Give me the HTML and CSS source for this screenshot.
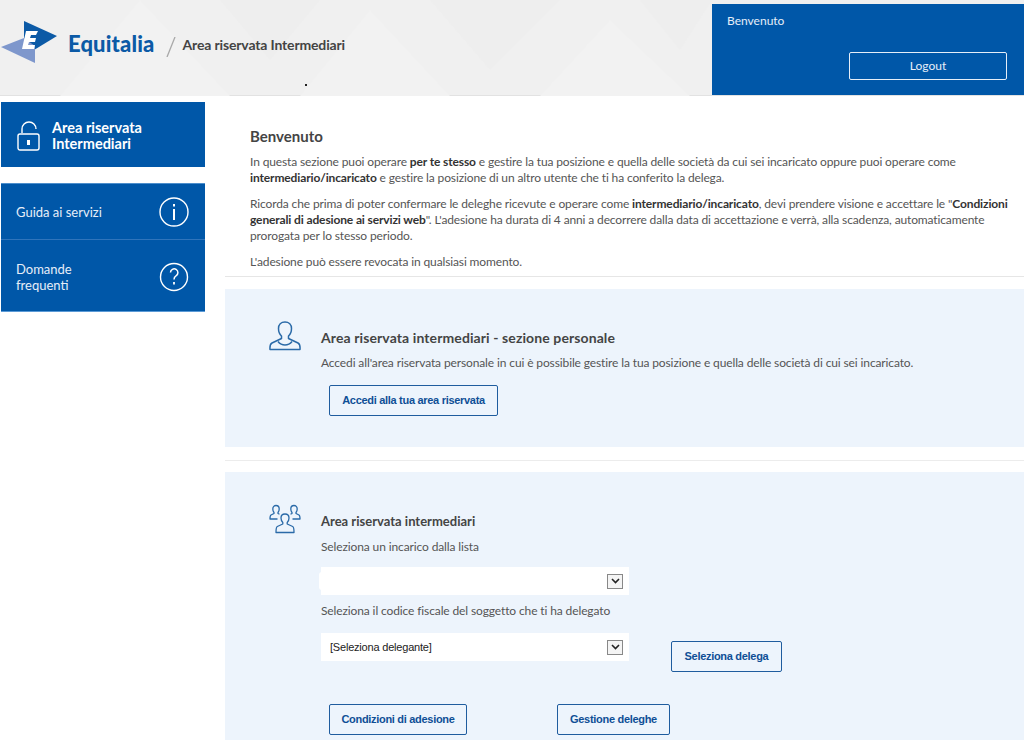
FILE: index.html
```html
<!DOCTYPE html>
<html lang="it">
<head>
  <meta charset="UTF-8">
  <title>Area riservata Intermediari - Equitalia</title>
  <link rel="stylesheet" href="styles.css">
</head>
<body>
  <header class="top">
    <svg class="top-bg" width="1024" height="96" viewBox="0 0 1024 96">
      <polygon points="60,96 140,0 230,96" fill="#f2f2f2"/>
      <polygon points="220,0 270,60 320,0" fill="#eeeeee"/>
      <polygon points="300,96 370,10 450,96" fill="#f2f2f2"/>
      <polygon points="430,0 490,70 560,0" fill="#eeeeee"/>
      <polygon points="540,96 610,20 690,96" fill="#f2f2f2"/>
      <polygon points="640,0 680,50 712,0" fill="#eeeeee"/>
    </svg>
    <i class="stray-dot"></i>
    <div class="brand">
      <svg class="logo" width="60" height="44" viewBox="0 0 60 44">
        <polygon points="24,1 57,16 34,30 24,24" fill="#0c5aa6"/>
        <polygon points="1,27 24,18 35,26 35,43" fill="#7e97cc"/>
        <polygon points="26,11 38,11 36,15 31,15 30,18 36,18 35,22 29,22 28,25 35,25 34,29 22,29" fill="#fff"/>
      </svg>
      <span class="brand-name">Equitalia</span>
      <svg class="brand-sep" width="10" height="20" viewBox="0 0 10 20"><path d="M9 0L1 20" stroke="#a8a8a8" stroke-width="1.300"/></svg>
      <span class="brand-sub">Area riservata Intermediari</span>
    </div>
    <div class="user-box">
      <div class="user-hello">Benvenuto</div>
      <a class="logout" href="#">Logout</a>
    </div>
  </header>

  <div class="page">
    <aside class="side">
      <div class="side-title">
        <svg width="24" height="30" viewBox="0 0 24 30" fill="none" stroke="#fff" stroke-width="1.400">
          <path d="M5 12V8a7 7 0 0 1 14 0"/>
          <rect x="1" y="13" width="21" height="16" rx="2"/>
          <rect x="10" y="19" width="3" height="5" fill="#fff" stroke="none"/>
        </svg>
        <span>Area riservata<br>Intermediari</span>
      </div>
      <nav class="side-nav">
        <a class="side-link" href="#">
          <span>Guida ai servizi</span>
          <svg width="30" height="30" viewBox="0 0 30 30" fill="none" stroke="#fff" stroke-width="1.400">
            <circle cx="15" cy="15" r="14"/>
            <path d="M15 12v11" stroke-width="2"/>
            <path d="M15 7v2.500" stroke-width="2"/>
          </svg>
        </a>
        <a class="side-link" href="#">
          <span>Domande<br>frequenti</span>
          <svg width="30" height="30" viewBox="0 0 30 30" fill="none" stroke="#fff" stroke-width="1.400">
            <circle cx="15" cy="15" r="13.500"/>
            <path d="M11.500 10.500a3.700 3.700 0 1 1 5.500 3.300c-1.400.8-2 1.700-2 3.700" stroke-width="1.500"/>
            <path d="M15 20v2.500" stroke-width="1.800"/>
          </svg>
        </a>
      </nav>
    </aside>

    <main class="main">
      <section class="intro">
        <h1>Benvenuto</h1>
        <p>In questa sezione puoi operare <b>per te stesso</b> e gestire la tua posizione e quella delle società da cui sei incaricato oppure puoi operare come <b>intermediario/incaricato</b> e gestire la posizione di un altro utente che ti ha conferito la delega.</p>
        <p>Ricorda che prima di poter confermare le deleghe ricevute e operare come <b>intermediario/incaricato</b>, devi prendere visione e accettare le "<b>Condizioni</b> <b>generali di adesione ai servizi web</b><span>". L'adesione ha durata di 4 anni a decorrere dalla data di accettazione e verrà, alla scadenza, automaticamente</span> <span>prorogata per lo stesso periodo.</span></p>
        <p>L'adesione può essere revocata in qualsiasi momento.</p>
      </section>

      <section class="panel panel-personal">
        <svg class="panel-icon" width="32" height="30" viewBox="0 0 32 30" fill="none" stroke="#2a6aa8" stroke-width="1.500">
          <path d="M16 1c-4 0-6.500 2.800-6.500 6.500 0 3.200 1.300 6 3 7.500v2.500L3 22c-2 1-2.300 3-2 6.500h30c.3-3.500 0-5.500-2-6.500l-9.500-4.500V15c1.700-1.500 3-4.300 3-7.500C22.500 3.800 20 1 16 1z" stroke-linejoin="round"/>
          <path d="M9 20.500c2 2.500 4.500 3.500 7 3.500s5-1 7-3.500"/>
        </svg>
        <div class="panel-body">
          <h2>Area riservata intermediari - sezione personale</h2>
          <p>Accedi all'area riservata personale in cui è possibile gestire la tua posizione e quella delle società di cui sei incaricato.</p>
          <a class="btn btn-access" href="#">Accedi alla tua area riservata</a>
        </div>
      </section>

      <div class="panel-rule"></div>

      <section class="panel panel-delegates">
        <svg class="panel-icon" width="32" height="30" viewBox="0 0 32 30" fill="none" stroke="#2a6aa8" stroke-width="1.300" stroke-linejoin="round">
          <path d="M16 10c-2.600 0-4 1.800-4 4 0 2 .8 3.500 1.800 4.500v1.500l-5.500 2.500C7 23.200 7 25 7 28.500h18c0-3.500 0-5.300-1.300-6L18.200 20v-1.500c1-1 1.800-2.500 1.800-4.500 0-2.200-1.400-4-4-4z"/>
          <path d="M8.500 15H1c0-2.500 0-3.500 1-4l3-1.500v-1C4.200 7.600 3.800 6.400 3.800 5 3.800 2.700 5.200 1.500 7 1.500S10.200 2.700 10.200 5c0 1.400-.4 2.600-1.200 3.500v1l1.500.8"/>
          <path d="M23.500 15H31c0-2.500 0-3.500-1-4l-3-1.500v-1c.8-.9 1.200-2.100 1.200-3.500 0-2.300-1.400-3.500-3.200-3.500S21.800 2.700 21.800 5c0 1.400.4 2.600 1.200 3.500v1l-1.500.8"/>
        </svg>
        <div class="panel-body">
          <h2>Area riservata intermediari</h2>
          <label class="field-label">Seleziona un incarico dalla lista</label>
          <div class="select-box">
            <span class="select-blank"></span>
            <span class="select-arrow"><svg width="9" height="6" viewBox="0 0 9 6" fill="none" stroke="#222" stroke-width="1.600"><path d="M1 1l3.500 3.500L8 1"/></svg></span>
          </div>
          <label class="field-label field-label-second">Seleziona il codice fiscale del soggetto che ti ha delegato</label>
          <div class="select-row">
            <div class="select-box">
              <span>[Seleziona delegante]</span>
              <span class="select-arrow"><svg width="9" height="6" viewBox="0 0 9 6" fill="none" stroke="#222" stroke-width="1.600"><path d="M1 1l3.500 3.500L8 1"/></svg></span>
            </div>
            <a class="btn btn-delega" href="#">Seleziona delega</a>
          </div>
          <div class="btn-row">
            <a class="btn btn-conditions" href="#">Condizioni di adesione</a>
            <a class="btn btn-manage" href="#">Gestione deleghe</a>
          </div>
        </div>
      </section>
    </main>
  </div>
</body>
</html>
```

FILE: styles.css
```css
html, body { height: 740px; overflow: hidden; }
body { margin: 0; background-color: #fff; font-family: Lato, "Open Sans", sans-serif; font-size: 12px; color: #555; }
a { text-decoration: none; }

.top { position: relative; height: 95px; border-bottom: 1px solid #e2e2e2; background-color: #f0f0f0; display: flex; justify-content: space-between; }
.top-bg { position: absolute; left: 0; top: 0; }
.stray-dot { position: absolute; left: 305px; top: 84px; width: 2px; height: 2px; background-color: #222; }
.brand { position: relative; display: flex; align-items: flex-start; padding: 20px 0 0 0; }
.brand-name { margin: 10px 0 0 8px; font-size: 22px; font-weight: 900; line-height: 28px; color: #0c5aa6; letter-spacing: 0.15px; }
.brand-sep { margin: 17px 0 0 11px; }
.brand-sub { margin: 16px 0 0 7px; font-size: 14px; font-weight: 700; line-height: 18px; color: #444; letter-spacing: -0.15px; }
.user-box { position: relative; width: 312px; margin-top: 4px; background-color: #0057a8; color: #e6eef8; padding: 10px 17px 0 15px; box-sizing: border-box; display: flex; flex-direction: column; }
.user-hello { font-size: 12px; line-height: 14px; }
.logout { align-self: flex-end; width: 158px; height: 28px; margin-top: 24px; border: 1px solid #e6eef8; border-radius: 2px; box-sizing: border-box; color: #e6eef8; font-size: 12px; text-align: center; line-height: 26px; }

.page { display: flex; }
.side { width: 204px; margin: 6px 20px 0 1px; flex: none; }
.side-title { height: 65px; background-color: #0057a8; display: flex; align-items: center; gap: 11px; padding: 2px 0 0 16px; box-sizing: border-box; color: #fff; font-size: 14.500px; font-weight: 700; line-height: 16px; }
.side-nav { margin-top: 16px; background-color: #0057a8; border-bottom: 1px solid #5b9ad6; border-top: 1px solid #4c8ecc; }
.side-link { height: 55px; display: flex; align-items: center; justify-content: space-between; padding: 0 16px 0 15px; color: #e6eef8; font-size: 13px; line-height: 16px; }
.side-link + .side-link { border-top: 1px solid #2f74bb; height: 72px; padding-top: 3px; box-sizing: border-box; }

.main { flex: 1; min-width: 0; }
.intro { padding: 31px 14px 0 25px; height: 181px; box-sizing: border-box; border-bottom: 1px solid #e6e6e6; }
.intro h1 { margin: 0 0 9px; font-size: 15px; font-weight: 700; color: #444; line-height: 18px; }
.intro p { margin: 0 0 10px; line-height: 16px; font-size: 12px; letter-spacing: -0.13px; color: #555; }
.intro b { font-weight: 700; color: #333; }

.panel { background-color: #edf4fc; display: flex; align-items: flex-start; }
.panel-personal { height: 158px; margin-top: 12px; padding: 32px 0 0 44px; box-sizing: border-box; }
.panel-rule { height: 1px; margin-top: 13px; background-color: #ececec; }
.panel-delegates { margin-top: 11px; height: 300px; padding: 32px 0 0 44px; box-sizing: border-box; }
.panel-icon { flex: none; }
.panel-body { margin-left: 20px; flex: 1; }
.panel h2 { margin: 8px 0 0; font-size: 14px; font-weight: 700; color: #444; line-height: 18px; letter-spacing: 0.1px; }
.panel-delegates h2 { font-size: 13px; letter-spacing: 0; }
.panel p { margin: 8px 0 0; font-size: 12px; line-height: 16px; letter-spacing: -0.12px; color: #555; }

.btn { display: block; box-sizing: border-box; height: 31px; line-height: 29px; border: 1px solid #1f5c9e; border-radius: 2px; text-align: center; font-family: "Liberation Sans", Arial, sans-serif; font-size: 11px; font-weight: 700; letter-spacing: -0.3px; color: #0f4f96; }
.btn-access { width: 169px; margin: 14px 0 0 8px; }
.btn-delega { width: 111px; margin: 22px 0 0 42px; }
.btn-conditions { width: 138px; margin-left: 8px; }
.btn-manage { width: 113px; margin-left: 90px; }
.btn-row { display: flex; margin-top: 32px; }

.field-label { display: block; margin-top: 9px; line-height: 16px; font-size: 12px; letter-spacing: -0.12px; color: #555; }
.field-label-second { margin-top: 8px; }
.select-box { width: 308px; height: 28px; margin-top: 12px; background-color: #fff; display: flex; align-items: center; justify-content: space-between; padding: 0 6px 0 9px; box-sizing: border-box; font-family: "Liberation Sans", Arial, sans-serif; font-size: 11px; letter-spacing: -0.2px; color: #222; }
.select-blank { width: 6px; height: 18px; margin-left: -11px; border-radius: 3px; background-color: #fff; }
.select-row .select-box { margin-top: 14px; }
.select-arrow { width: 16px; height: 15px; border: 1px solid #888; background-color: #f4f4f4; box-sizing: border-box; display: flex; align-items: center; justify-content: center; }
.select-row { display: flex; }
```
